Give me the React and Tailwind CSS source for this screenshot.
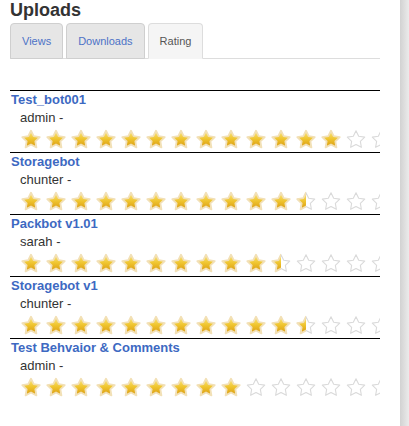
import React, { useId } from 'react';

const STAR = 'M12 3L14.94 8.95L21.51 9.91L16.76 14.55L17.88 21.09L12 18L6.12 21.09L7.24 14.55L2.49 9.91L9.06 8.95Z';

const uploads = [
  { title: 'Test_bot001', user: 'admin', full: 13, half: false },
  { title: 'Storagebot', user: 'chunter', full: 11, half: true },
  { title: 'Packbot v1.01', user: 'sarah', full: 10, half: true },
  { title: 'Storagebot v1', user: 'chunter', full: 11, half: true },
  { title: 'Test Behvaior & Comments', user: 'admin', full: 9, half: false },
];

function Star({ kind }) {
  const id = useId().replace(/:/g, '');
  return (
    <svg width="22" height="22" viewBox="0 0 24 24" className="flex-none">
      <defs>
        <linearGradient id={'g' + id} x1="0" y1="0" x2="0" y2="1">
          <stop offset="0%" stopColor="#fbe680" />
          <stop offset="50%" stopColor="#efc42e" />
          <stop offset="100%" stopColor="#d99a10" />
        </linearGradient>
        <clipPath id={'c' + id}>
          <rect x="0" y="0" width="12" height="24" />
        </clipPath>
      </defs>
      {kind === 'full' ? (
        <path d={STAR} fill={'url(#g' + id + ')'} stroke="#f2e0b6" strokeWidth="2" strokeLinejoin="round" />
      ) : (
        <>
          <path d={STAR} fill="#ffffff" stroke="#dadada" strokeWidth="1.2" strokeLinejoin="round" />
          {kind === 'half' && (
            <path d={STAR} fill={'url(#g' + id + ')'} stroke="#f2e0b6" strokeWidth="2" strokeLinejoin="round" clipPath={'url(#c' + id + ')'} />
          )}
        </>
      )}
    </svg>
  );
}

function Rating({ full, half }) {
  const stars = [];
  for (let i = 0; i < 16; i++) {
    let kind = 'empty';
    if (i < full) kind = 'full';
    else if (i === full && half) kind = 'half';
    stars.push(
      <div key={i} className="w-[25px] flex-none">
        <Star kind={kind} />
      </div>
    );
  }
  return <div className="flex h-[25px] pt-[1px] pl-[10px] overflow-hidden">{stars}</div>;
}

export default function App() {
  return (
    <div className="flex h-screen bg-white" style={{ fontFamily: '"Liberation Sans", Arial, sans-serif' }}>
      <div className="w-[400px] flex-none pl-[10px] pr-[20px]">
        <h1 className="text-[18px] leading-[20px] font-bold text-[#333]">Uploads</h1>

        <div className="flex gap-[3px] mt-[3px] border-b border-[#ddd]">
          <div className="-mb-px h-[36px] px-[11px] flex items-center rounded-t-[4px] border border-[#cfcfcf] bg-[#e6e6e6] text-[11px] text-[#4d72c6]">
            Views
          </div>
          <div className="-mb-px h-[36px] px-[11px] flex items-center rounded-t-[4px] border border-[#cfcfcf] bg-[#e6e6e6] text-[11px] text-[#4d72c6]">
            Downloads
          </div>
          <div className="-mb-px h-[36px] px-[11px] flex items-center rounded-t-[4px] border border-[#ddd] border-b-[#f5f5f5] bg-[#f5f5f5] text-[11px] text-[#555]">
            Rating
          </div>
        </div>

        <div className="mt-[31px]">
          {uploads.map((u) => (
            <div key={u.title} className="border-t border-black h-[62px] overflow-hidden">
              <div className="text-[13px] leading-[17px] font-bold text-[#3d69c2] pl-px">{u.title}</div>
              <div className="text-[13px] leading-[19px] text-[#333] pl-[10px]">{u.user} -</div>
              <Rating full={u.full} half={u.half} />
            </div>
          ))}
        </div>
      </div>
      <div className="w-[9px] flex-none bg-linear-to-r from-[#d2d2d2] to-[#ebebeb]" />
    </div>
  );
}
